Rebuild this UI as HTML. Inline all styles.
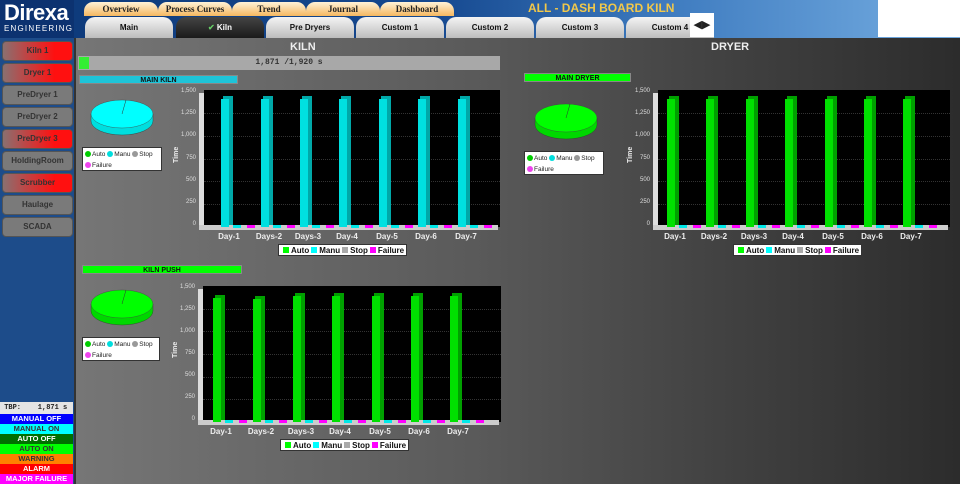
<!DOCTYPE html>
<html><head><meta charset="utf-8"><style>
*{margin:0;padding:0;box-sizing:border-box}
body{width:960px;height:484px;overflow:hidden;position:relative;font-family:"Liberation Sans",sans-serif;background:#1d4c8a}
.a{position:absolute}
#hdr{left:0;top:0;width:960px;height:38px;background:linear-gradient(90deg,#0c3878 0%,#15488f 45%,#3f7cc0 70%,#76aee2 100%)}
.tt{position:absolute;top:2px;height:14px;background:linear-gradient(#fff2d8,#f5b860);border-radius:9px 9px 0 0;font:bold 9px "Liberation Serif",serif;color:#222;text-align:center;line-height:14px}
.st{position:absolute;top:17px;height:21px;background:linear-gradient(#f4f4f4,#bdbdbd);border-radius:10px 10px 0 0;font:bold 8px "Liberation Sans",sans-serif;color:#111;text-align:center;line-height:21px}
#main{left:74px;top:38px;width:886px;height:446px;background:linear-gradient(90deg,#767676 0%,#5a5a5a 45%,#404040 75%,#2c2c2c 100%);border-left:2px solid #333}
.btn{position:absolute;left:2px;width:71px;height:20px;border-radius:4px;background:#7a7a7a;border:1px solid #555;font:bold 8px "Liberation Sans",sans-serif;color:#333;text-align:center;line-height:18px}
.red{background:linear-gradient(90deg,#8a7070,#ff1010 75%)}
.lg{position:absolute;left:0;width:73px;height:10px;font:bold 7.5px "Liberation Sans",sans-serif;text-align:center;line-height:10px}
.ttl{position:absolute;height:9px;font:bold 7px "Liberation Sans",sans-serif;color:#111;text-align:center;line-height:9px;border:1px solid #888}
.yl{position:absolute;font:6px "Liberation Sans",sans-serif;color:#ddd;text-align:right;width:24px}
.dl{position:absolute;font:bold 8px "Liberation Sans",sans-serif;color:#eee;width:40px;text-align:center}
.leg{position:absolute;background:#fff;border:1px solid #333;font:bold 8px "Liberation Sans",sans-serif;color:#111;height:12px;line-height:11px;padding:0 2px;white-space:nowrap}
.pl{position:absolute;background:#fff;border:1px solid #333;font:6.5px "Liberation Sans",sans-serif;color:#222;line-height:11px;padding:1px 2px;white-space:nowrap}
.dot{display:inline-block;width:6px;height:6px;border-radius:50%;margin-right:1px;vertical-align:-1px}
.sq{display:inline-block;width:6px;height:6px;margin:0 2px 0 2px;vertical-align:0}
h2{position:absolute;font:bold 11px "Liberation Sans",sans-serif;color:#eee}
</style></head><body>
<div id="hdr" class="a"></div>
<div class="a" style="left:0;top:0;width:74px;height:38px;background:#0c3270"></div>
<div class="a" style="left:4px;top:1px;font:bold 22px 'Liberation Sans',sans-serif;color:#fff;letter-spacing:-0.5px;line-height:24px">Direxa</div>
<div class="a" style="left:4px;top:24px;font:8px 'Liberation Sans',sans-serif;color:#fff;letter-spacing:1.2px">ENGINEERING</div>
<div class="tt" style="left:84px;width:74px">Overview</div>
<div class="tt" style="left:158px;width:74px">Process Curves</div>
<div class="tt" style="left:232px;width:74px">Trend</div>
<div class="tt" style="left:306px;width:74px">Journal</div>
<div class="tt" style="left:380px;width:74px">Dashboard</div>
<div class="a" style="left:528px;top:1px;font:bold 12px 'Liberation Sans',sans-serif;color:#f2c84a">ALL - DASH BOARD KILN</div>
<div class="st" style="left:85px;width:88px">Main</div>
<div class="st" style="left:176px;width:88px;background:linear-gradient(#444,#1a1a1a);color:#fff"><span style="color:#6c6">✔</span> Kiln</div>
<div class="st" style="left:266px;width:88px">Pre Dryers</div>
<div class="st" style="left:356px;width:88px">Custom 1</div>
<div class="st" style="left:446px;width:88px">Custom 2</div>
<div class="st" style="left:536px;width:88px">Custom 3</div>
<div class="st" style="left:626px;width:88px">Custom 4</div>
<div class="a" style="left:690px;top:13px;width:24px;height:24px;background:#fff;font:11px 'DejaVu Sans';line-height:24px;text-align:center;color:#222">◀▶</div>
<div class="a" style="left:878px;top:0;width:82px;height:37px;background:#fff"></div>

<div class="btn red" style="top:41px">Kiln 1</div>
<div class="btn red" style="top:63px">Dryer 1</div>
<div class="btn" style="top:85px">PreDryer 1</div>
<div class="btn" style="top:107px">PreDryer 2</div>
<div class="btn red" style="top:129px">PreDryer 3</div>
<div class="btn" style="top:151px">HoldingRoom</div>
<div class="btn red" style="top:173px">Scrubber</div>
<div class="btn" style="top:195px">Haulage</div>
<div class="btn" style="top:217px">SCADA</div>

<div class="a" style="left:0;top:402px;width:73px;height:12px;background:#e4e4e4;font:bold 7px 'Liberation Mono',monospace;line-height:12px;color:#222">&nbsp;TBP:&nbsp;&nbsp;&nbsp;&nbsp;1,871 s</div>
<div class="lg" style="top:414px;background:#0000ff;color:#fff">MANUAL OFF</div>
<div class="lg" style="top:424px;background:#00ffff;color:#333">MANUAL ON</div>
<div class="lg" style="top:434px;background:#007000;color:#fff">AUTO OFF</div>
<div class="lg" style="top:444px;background:#00ff00;color:#333">AUTO ON</div>
<div class="lg" style="top:454px;background:#ff8000;color:#333">WARNING</div>
<div class="lg" style="top:464px;background:#ff0000;color:#fff">ALARM</div>
<div class="lg" style="top:474px;background:#ff00ff;color:#fff">MAJOR FAILURE</div>

<div id="main" class="a"></div>
<h2 style="left:290px;top:41px">KILN</h2>
<h2 style="left:711px;top:41px">DRYER</h2>
<div class="a" style="left:78px;top:56px;width:422px;height:14px;background:#a8a8a8;font:bold 8px 'Liberation Mono',monospace;color:#333;text-align:center;line-height:14px">1,871 /1,920 s</div>
<div class="a" style="left:79px;top:57px;width:10px;height:12px;background:#33ee33"></div>
<div class="ttl" style="left:79px;top:75px;width:159px;background:#1ec4d8">MAIN KILN</div>
<div class="ttl" style="left:524px;top:73px;width:107px;background:#00ff00">MAIN DRYER</div>
<div class="ttl" style="left:82px;top:265px;width:160px;background:#00ff00">KILN PUSH</div>

<svg class="a" style="left:0;top:0" width="960" height="484">
<g id="pies"></g>
</svg>
<div id="charts"></div>
<div class="pl" style="left:82px;top:147px;width:80px;height:24px"><span class="dot" style="background:#0c0"></span>Auto <span class="dot" style="background:#0dd"></span>Manu <span class="dot" style="background:#999"></span>Stop<br><span class="dot" style="background:#e4e"></span>Failure</div>
<div class="pl" style="left:524px;top:151px;width:80px;height:24px"><span class="dot" style="background:#0c0"></span>Auto <span class="dot" style="background:#0dd"></span>Manu <span class="dot" style="background:#999"></span>Stop<br><span class="dot" style="background:#e4e"></span>Failure</div>
<div class="pl" style="left:82px;top:337px;width:78px;height:24px"><span class="dot" style="background:#0c0"></span>Auto <span class="dot" style="background:#0dd"></span>Manu <span class="dot" style="background:#999"></span>Stop<br><span class="dot" style="background:#e4e"></span>Failure</div>

<script>
var pies=document.getElementById('pies');
function pie(cx,cy,c1,c2){
 pies.innerHTML+='<path d="M'+(cx-31)+' '+cy+' v7 a31 14 0 0 0 62 0 v-7 z" fill="'+c2+'" stroke="#333" stroke-width="0.4"/>'+
 '<ellipse cx="'+cx+'" cy="'+cy+'" rx="31" ry="14" fill="'+c1+'" stroke="#444" stroke-width="0.4"/>'+
 '<line x1="'+cx+'" y1="'+cy+'" x2="'+(cx+4)+'" y2="'+(cy-14)+'" stroke="#333" stroke-width="0.5"/>';
}
pie(122,114,'#00ffff','#00dede');pie(566,118,'#00ff00','#00d800');pie(122,304,'#00ff00','#00d800');
var out='';
function chart(x0,y0,w,h,xs,tops,c1,c2,legx,names){
 out+='<div class="a" style="left:'+(x0-5)+'px;top:'+(y0+3)+'px;width:5px;height:'+h+'px;background:#ddd"></div>';
 out+='<div class="a" style="left:'+x0+'px;top:'+y0+'px;width:'+w+'px;height:'+h+'px;background:#000"></div>';
 for(var i=1;i<6;i++)out+='<div class="a" style="left:'+x0+'px;top:'+(y0+h-i*h/6)+'px;width:'+w+'px;border-top:1px dotted #333"></div>';
 out+='<div class="a" style="left:'+(x0-5)+'px;top:'+(y0+h-2)+'px;width:'+(w+3)+'px;height:5px;background:#ccc"></div>';
 var labs=['1,500','1,250','1,000','750','500','250','0'];
 for(var i=0;i<7;i++)out+='<div class="yl" style="left:'+(x0-32)+'px;top:'+(y0+2+i*(h-4)/6-4)+'px">'+labs[i]+'</div>';
 out+='<div class="a" style="left:'+(x0-31)+'px;top:'+(y0+h/2+4)+'px;transform:rotate(-90deg);transform-origin:0 0;font:bold 7px Liberation Sans;color:#eee">Time</div>';
 for(var i=0;i<7;i++){var x=xs[i],t=tops[i];
  out+='<div class="a" style="left:'+x+'px;top:'+t+'px;width:8px;height:'+(y0+h-t)+'px;background:'+c1+'"></div>';
  out+='<div class="a" style="left:'+(x+8)+'px;top:'+(t-3)+'px;width:4px;height:'+(y0+h-t+1)+'px;background:'+c2+'"></div>';
  out+='<div class="a" style="left:'+(x+2)+'px;top:'+(t-3)+'px;width:8px;height:3px;background:'+c2+'"></div>';
  out+='<div class="a" style="left:'+(x+12)+'px;top:'+(y0+h-2)+'px;width:8px;height:3px;background:#00e8e8"></div>';
  out+='<div class="a" style="left:'+(x+26)+'px;top:'+(y0+h-2)+'px;width:8px;height:3px;background:#f0f"></div>';
  out+='<div class="dl" style="left:'+(x-12)+'px;top:'+(y0+h+5)+'px">'+names[i]+'</div>';
 }
 out+='<div class="leg" style="left:'+legx+'px;top:'+(y0+h+17)+'px"><span class="sq" style="background:#0f0"></span>Auto<span class="sq" style="background:#0ff"></span>Manu<span class="sq" style="background:#aaa"></span>Stop<span class="sq" style="background:#f0f"></span>Failure</div>';
}
var N=['Day-1','Days-2','Days-3','Day-4','Day-5','Day-6','Day-7'];
chart(204,90,296,137,[221,261,300,339,379,418,458],[99,99,99,99,99,99,99],'#00e0e0','#00a8a8',278,N);
chart(658,90,292,137,[667,706,746,785,825,864,903],[99,99,99,99,99,99,99],'#00e000','#00a000',733,N);
chart(203,286,298,136,[213,253,293,332,372,411,450],[298,299,296,296,296,296,296],'#00e000','#00a000',280,N);
document.getElementById('charts').innerHTML=out;
</script>
</body></html>
